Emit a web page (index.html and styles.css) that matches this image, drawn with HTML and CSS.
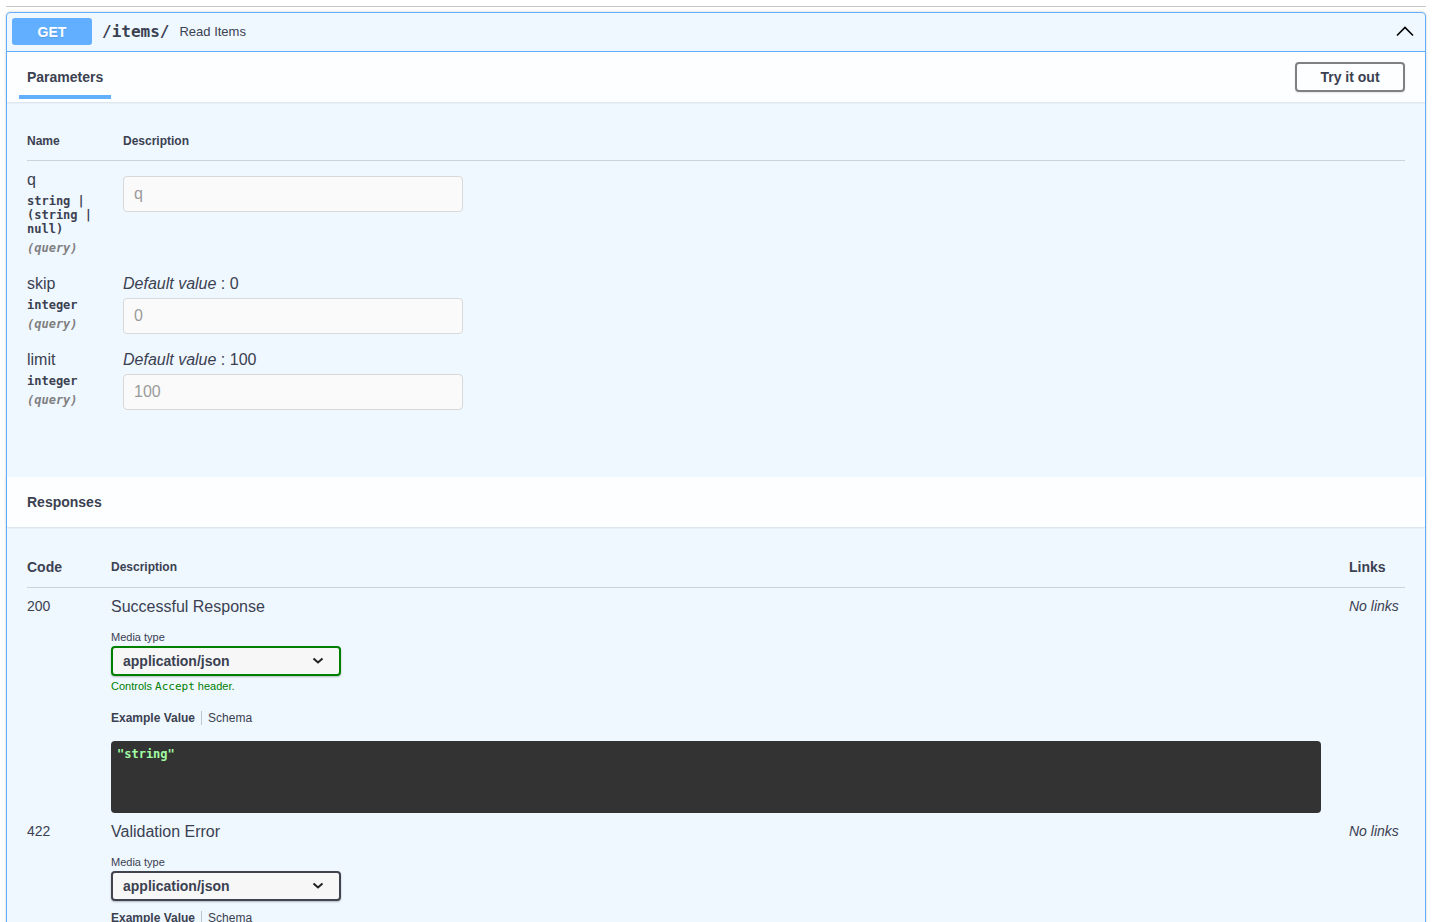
FILE: index.html
```html
<!DOCTYPE html>
<html lang="en">
<head>
    <meta charset="UTF-8">
    <meta name="viewport" content="width=device-width, initial-scale=1.0">
    <title>Read Items</title>
    <link rel="stylesheet" href="styles.css">
</head>
<body>
    <div class="page">
        <div class="tag-line"></div>

        <div class="opblock">
            <div class="summary">
                <span class="method">GET</span>
                <span class="path">/items/</span>
                <span class="summary-desc">Read Items</span>
                <svg class="arrow" width="20" height="20" viewBox="0 0 20 20">
                    <polyline points="2,13.5 10,5.5 18,13.5" fill="none" stroke="#000" stroke-width="1.6"/>
                </svg>
            </div>

            <div class="section-header">
                <div class="tab">Parameters</div>
                <button class="try-btn">Try it out</button>
            </div>

            <div class="params">
                <div class="params-table">
                    <div class="th">Name</div>
                    <div class="th">Description</div>

                    <div class="param-name-cell">
                        <div class="param-name">q</div>
                        <div class="param-type">string | (string | null)</div>
                        <div class="param-in">(query)</div>
                    </div>
                    <div class="param-desc-cell">
                        <input class="param-input" type="text" placeholder="q">
                    </div>

                    <div class="param-name-cell">
                        <div class="param-name">skip</div>
                        <div class="param-type">integer</div>
                        <div class="param-in">(query)</div>
                    </div>
                    <div class="param-desc-cell">
                        <div class="default-value"><i>Default value</i> : 0</div>
                        <input class="param-input" type="text" placeholder="0">
                    </div>

                    <div class="param-name-cell">
                        <div class="param-name">limit</div>
                        <div class="param-type">integer</div>
                        <div class="param-in">(query)</div>
                    </div>
                    <div class="param-desc-cell">
                        <div class="default-value"><i>Default value</i> : 100</div>
                        <input class="param-input" type="text" placeholder="100">
                    </div>
                </div>
            </div>

            <div class="section-header">
                <h4 class="section-title">Responses</h4>
            </div>

            <div class="responses">
                <div class="responses-table">
                    <div class="rth rth-big">Code</div>
                    <div class="rth">Description</div>
                    <div class="rth rth-big">Links</div>

                    <!-- 200 -->
                    <div class="resp-code">200</div>
                    <div class="resp-desc">
                        <div class="resp-title">Successful Response</div>
                        <div class="media-label">Media type</div>
                        <div class="media-select accept">
                            <span>application/json</span>
                            <svg width="12" height="8" viewBox="0 0 12 8">
                                <polyline points="1.5,1.5 6,5.5 10.5,1.5" fill="none" stroke="#222" stroke-width="2"/>
                            </svg>
                        </div>
                        <div class="media-hint">Controls <code>Accept</code> header.</div>
                        <div class="example-tabs">
                            <span class="ex-tab active">Example Value</span>
                            <span class="ex-tab">Schema</span>
                        </div>
                        <pre class="code-block">"string"</pre>
                    </div>
                    <div class="resp-links">No links</div>

                    <!-- 422 -->
                    <div class="resp-code">422</div>
                    <div class="resp-desc">
                        <div class="resp-title">Validation Error</div>
                        <div class="media-label">Media type</div>
                        <div class="media-select">
                            <span>application/json</span>
                            <svg width="12" height="8" viewBox="0 0 12 8">
                                <polyline points="1.5,1.5 6,5.5 10.5,1.5" fill="none" stroke="#222" stroke-width="2"/>
                            </svg>
                        </div>
                        <div class="example-tabs tight">
                            <span class="ex-tab active">Example Value</span>
                            <span class="ex-tab">Schema</span>
                        </div>
                        <pre class="code-block">{
  "detail": [
    {
      "loc": [
        "string",
        0
      ],
      "msg": "string",
      "type": "string"
    }
  ]
}</pre>
                    </div>
                    <div class="resp-links">No links</div>
                </div>
            </div>
        </div>
    </div>
</body>
</html>
```

FILE: styles.css
```css
* {
    margin: 0;
    padding: 0;
    box-sizing: border-box;
}

html, body {
    overflow: hidden;
}

body {
    background-color: #ffffff;
    font-family: "Liberation Sans", Arial, sans-serif;
    color: #3b4151;
}

.page {
    padding: 0 6px;
}

.tag-line {
    height: 7px;
    border-bottom: 1px solid rgba(59, 65, 81, 0.3);
}

.opblock {
    margin-top: 5px;
    border: 1px solid #61affe;
    border-radius: 4px;
    background-color: rgba(97, 175, 254, 0.1);
    box-shadow: 0 0 3px rgba(0, 0, 0, 0.19);
}

/* summary row */
.summary {
    display: flex;
    align-items: center;
    padding: 5px 10px 6px 5px;
    border-bottom: 1px solid #61affe;
}

.method {
    width: 80px;
    height: 27px;
    display: flex;
    justify-content: center;
    align-items: center;
    background-color: #61affe;
    border-radius: 3px;
    color: white;
    font-size: 14px;
    font-weight: bold;
    text-shadow: 0 1px 0 rgba(0, 0, 0, 0.1);
}

.path {
    padding: 0 10px;
    font-family: "DejaVu Sans Mono", monospace;
    font-size: 16px;
    font-weight: 600;
}

.summary-desc {
    flex: 1;
    font-size: 13px;
}

/* section headers */
.section-header {
    height: 50px;
    display: flex;
    align-items: center;
    justify-content: space-between;
    padding: 0 20px;
    background-color: rgba(255, 255, 255, 0.8);
    box-shadow: 0 1px 2px rgba(0, 0, 0, 0.1);
}

.tab {
    align-self: stretch;
    display: flex;
    align-items: center;
    margin-left: -8px;
    margin-bottom: 3px;
    padding: 7px 8px 0;
    border-bottom: 4px solid #61affe;
    font-size: 14px;
    font-weight: bold;
}

.section-title {
    font-size: 14px;
    font-weight: bold;
}

.try-btn {
    width: 110px;
    height: 30px;
    border: 2px solid #808080;
    border-radius: 4px;
    background: transparent;
    font-family: inherit;
    font-size: 14px;
    font-weight: bold;
    color: #3b4151;
    box-shadow: 0 1px 2px rgba(0, 0, 0, 0.1);
    cursor: pointer;
}

/* parameters */
.params {
    padding: 20px 20px 60px;
}

.params-table {
    display: grid;
    grid-template-columns: 96px 1fr;
}

.th {
    padding: 12px 0;
    font-size: 12px;
    line-height: 14px;
    font-weight: bold;
    border-bottom: 1px solid rgba(59, 65, 81, 0.2);
}

.param-name-cell {
    padding: 10px 10px 10px 0;
}

.param-name {
    font-size: 16px;
    line-height: 18px;
}

.param-type {
    padding-top: 5px;
    font-family: "DejaVu Sans Mono", monospace;
    font-size: 12px;
    line-height: 14px;
    font-weight: 600;
}

.param-in {
    margin-top: 5px;
    font-family: "DejaVu Sans Mono", monospace;
    font-size: 12px;
    line-height: 14px;
    font-weight: 600;
    font-style: italic;
    color: #808080;
}

.param-desc-cell {
    padding-top: 10px;
}

.default-value {
    font-size: 16px;
    line-height: 18px;
}

.param-input {
    display: block;
    width: 340px;
    height: 36px;
    margin-top: 5px;
    padding: 0 10px;
    border: 1px solid #d9d9d9;
    border-radius: 4px;
    background-color: #fafafa;
    font-family: inherit;
    font-size: 16px;
    color: #3b4151;
}

.param-input::placeholder {
    color: #9a9a9a;
}

/* responses */
.responses {
    padding: 20px 20px 20px;
}

.responses-table {
    display: grid;
    grid-template-columns: 84px 1fr 56px;
}

.rth {
    display: flex;
    align-items: center;
    padding: 12px 0;
    min-height: 40px;
    font-size: 12px;
    font-weight: bold;
    border-bottom: 1px solid rgba(59, 65, 81, 0.2);
}

.rth-big {
    font-size: 14px;
}

.resp-code {
    padding-top: 10px;
    font-size: 14px;
    line-height: 16px;
}

.resp-desc {
    padding: 10px 28px 0 0;
}

.resp-title {
    font-size: 16px;
    line-height: 18px;
}

.resp-links {
    padding-top: 10px;
    font-size: 14px;
    line-height: 16px;
    font-style: italic;
}

.media-label {
    margin-top: 15px;
    font-size: 11px;
    line-height: 13px;
}

.media-select {
    width: 230px;
    height: 30px;
    margin-top: 2px;
    display: flex;
    align-items: center;
    justify-content: space-between;
    padding: 0 15px 0 10px;
    border: 2px solid #41444e;
    border-radius: 4px;
    background-color: #f7f7f7;
    box-shadow: 0 1px 2px rgba(0, 0, 0, 0.25);
    font-size: 14px;
    font-weight: bold;
}

.media-select.accept {
    border-color: green;
}

.media-hint {
    margin-top: 4px;
    font-size: 11px;
    line-height: 13px;
    color: green;
}

.media-hint code {
    font-family: "DejaVu Sans Mono", monospace;
    font-size: 11px;
}

.example-tabs {
    display: flex;
    align-items: center;
    margin-top: 18px;
    font-size: 12px;
    line-height: 14px;
}

.example-tabs.tight {
    margin-top: 10px;
}

.ex-tab + .ex-tab {
    margin-left: 6px;
    padding-left: 6px;
    border-left: 1px solid rgba(0, 0, 0, 0.2);
}

.ex-tab.active {
    font-weight: bold;
}

.code-block {
    margin-top: 16px;
    min-height: 72px;
    padding: 6px;
    border-radius: 4px;
    background-color: #333333;
    color: #a2fca2;
    font-family: "DejaVu Sans Mono", monospace;
    font-size: 12px;
    line-height: 15px;
    font-weight: 600;
}
```
